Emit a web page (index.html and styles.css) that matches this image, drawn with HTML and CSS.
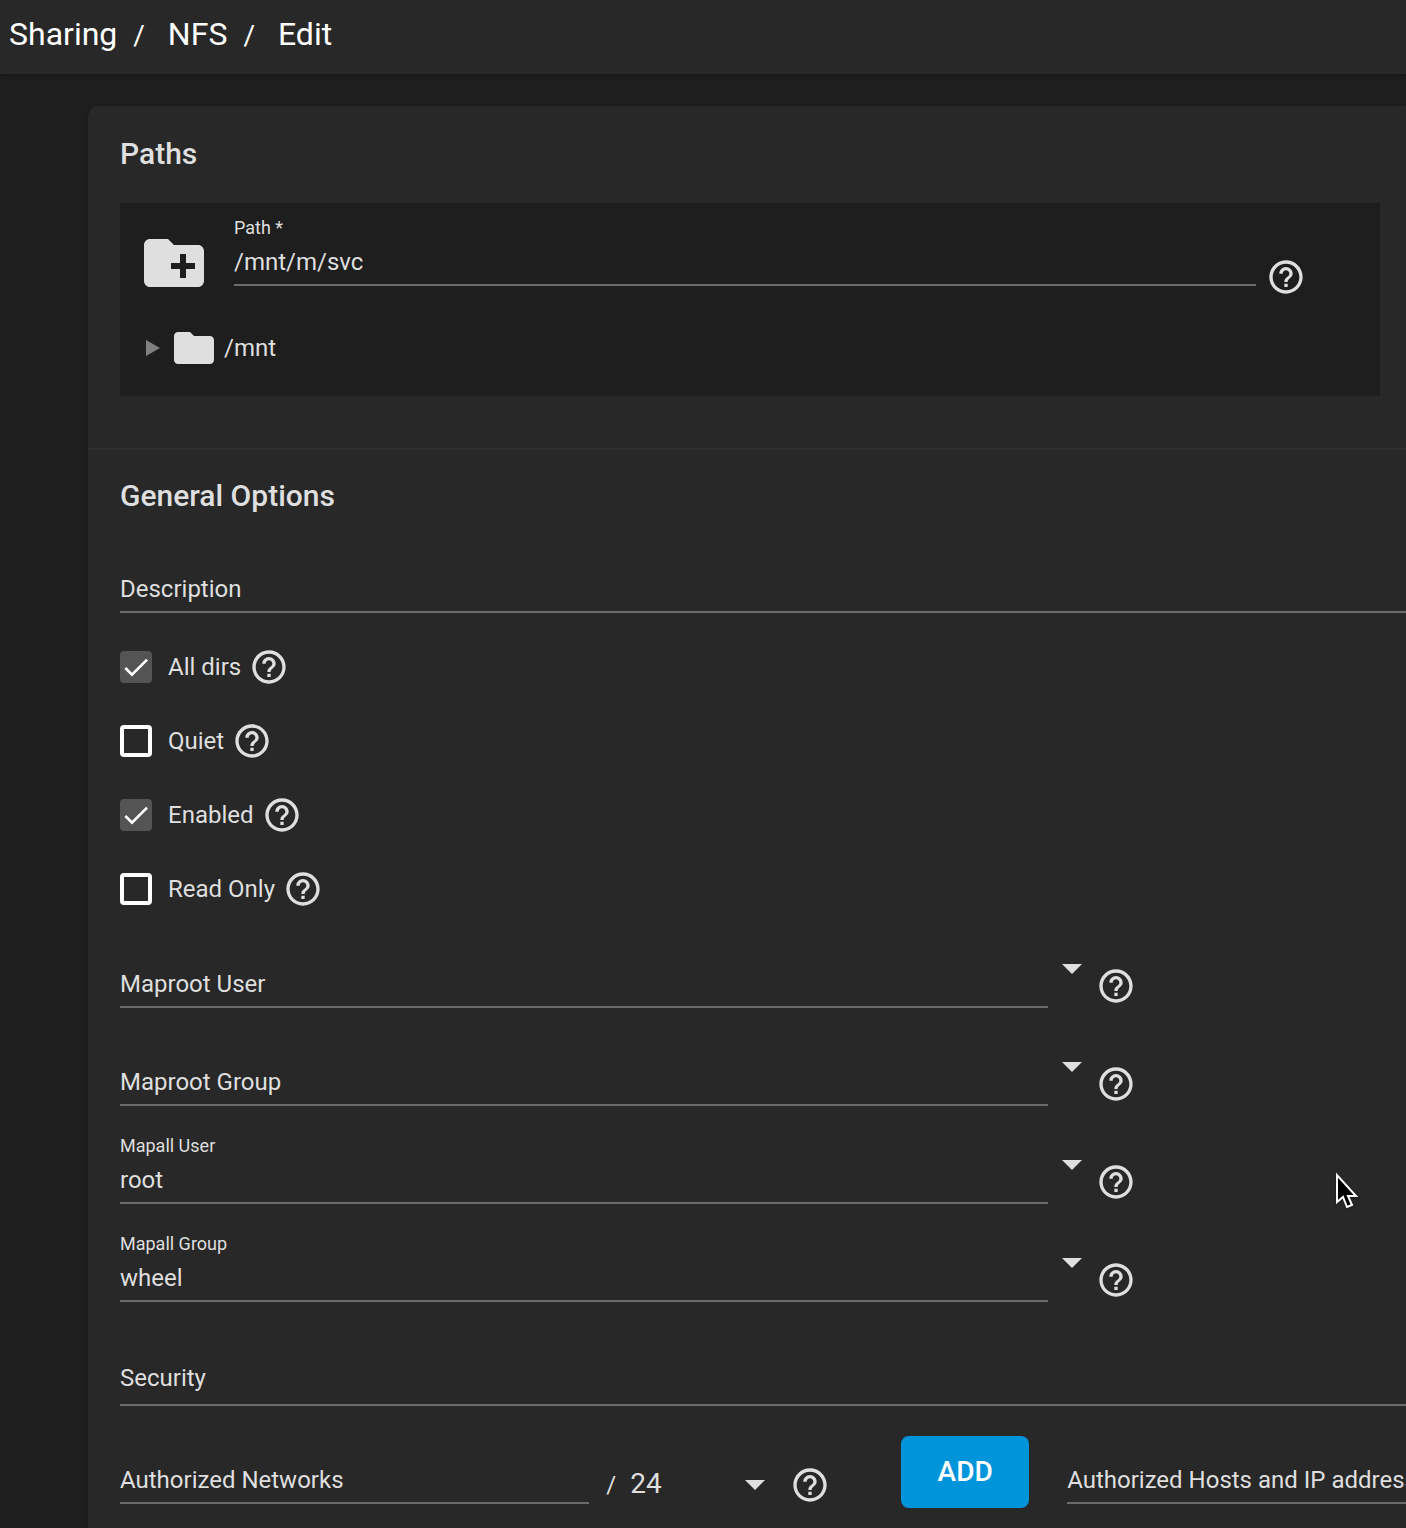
FILE: index.html
```html
<!DOCTYPE html>
<html lang="en">
<head>
  <meta charset="UTF-8">
  <meta name="viewport" content="width=device-width, initial-scale=1">
  <title>Sharing / NFS / Edit</title>
  <link rel="stylesheet" href="styles.css">
</head>
<body>
  <!-- shared icons -->
  <svg class="sprite" aria-hidden="true">
    <symbol id="icon-help" viewBox="0 0 24 24">
      <path d="M11 18h2v-2h-2v2zm1-16C6.48 2 2 6.48 2 12s4.48 10 10 10 10-4.48 10-10S17.52 2 12 2zm0 18c-4.41 0-8-3.59-8-8s3.59-8 8-8 8 3.59 8 8-3.59 8-8 8zm0-14c-2.21 0-4 1.79-4 4h2c0-1.100.9-2 2-2s2 .9 2 2c0 2-3 1.75-3 5h2c0-2.25 3-2.500 3-5 0-2.21-1.79-4-4-4z"/>
    </symbol>
    <symbol id="icon-arrow" viewBox="0 0 24 24">
      <path d="M7 10l5 5 5-5z"/>
    </symbol>
    <symbol id="icon-folder" viewBox="0 0 24 24">
      <path d="M10 4H4c-1.11 0-2 .89-2 2v12c0 1.1.9 2 2 2h16c1.1 0 2-.9 2-2V8c0-1.11-.9-2-2-2h-8l-2-2z"/>
    </symbol>
    <symbol id="icon-folder-plus" viewBox="0 0 24 24">
      <path fill-rule="evenodd" d="M10 4H4c-1.11 0-2 .89-2 2v12c0 1.1.9 2 2 2h16c1.1 0 2-.9 2-2V8c0-1.11-.9-2-2-2h-8l-2-2zM14 9h2v3h3v2h-3v3h-2v-3h-3v-2h3V9z"/>
    </symbol>
  </svg>

  <header class="topbar">
    <nav class="breadcrumb" aria-label="Breadcrumb">
      <a href="#sharing">Sharing</a>
      <span class="separator">/</span>
      <a href="#nfs">NFS</a>
      <span class="separator">/</span>
      <a href="#edit">Edit</a>
    </nav>
  </header>

  <main class="page">
    <form class="card">
      <section class="section">
        <h2 class="section-title">Paths</h2>
        <div class="explorer">
          <div class="path-row">
            <svg class="icon-xl" aria-hidden="true"><use href="#icon-folder-plus"/></svg>
            <div class="field">
              <label for="path">Path *</label>
              <input id="path" type="text" value="/mnt/m/svc" required>
            </div>
            <button type="button" class="help" aria-label="Path help"><svg><use href="#icon-help"/></svg></button>
          </div>
          <div class="tree-row">
            <button type="button" class="tree-toggle" aria-label="Expand /mnt">
              <svg viewBox="0 0 14 16"><path d="M0 0l14 8-14 8z"/></svg>
            </button>
            <svg class="icon-lg" aria-hidden="true"><use href="#icon-folder"/></svg>
            <span>/mnt</span>
          </div>
        </div>
      </section>

      <section class="section">
        <h2 class="section-title">General Options</h2>

        <div class="field empty">
          <label for="description">Description</label>
          <input id="description" type="text">
        </div>

        <div class="checks">
          <div class="check">
            <input id="alldirs" type="checkbox" checked>
            <label for="alldirs">All dirs</label>
            <button type="button" class="help" aria-label="All dirs help"><svg><use href="#icon-help"/></svg></button>
          </div>
          <div class="check">
            <input id="quiet" type="checkbox">
            <label for="quiet">Quiet</label>
            <button type="button" class="help" aria-label="Quiet help"><svg><use href="#icon-help"/></svg></button>
          </div>
          <div class="check">
            <input id="enabled" type="checkbox" checked>
            <label for="enabled">Enabled</label>
            <button type="button" class="help" aria-label="Enabled help"><svg><use href="#icon-help"/></svg></button>
          </div>
          <div class="check">
            <input id="readonly" type="checkbox">
            <label for="readonly">Read Only</label>
            <button type="button" class="help" aria-label="Read Only help"><svg><use href="#icon-help"/></svg></button>
          </div>
        </div>

        <div class="combos">
          <div class="combo">
            <div class="field empty">
              <label for="maproot-user">Maproot User</label>
              <input id="maproot-user" type="text">
            </div>
            <button type="button" class="drop" aria-label="Show users"><svg><use href="#icon-arrow"/></svg></button>
            <button type="button" class="help" aria-label="Maproot User help"><svg><use href="#icon-help"/></svg></button>
          </div>
          <div class="combo">
            <div class="field empty">
              <label for="maproot-group">Maproot Group</label>
              <input id="maproot-group" type="text">
            </div>
            <button type="button" class="drop" aria-label="Show groups"><svg><use href="#icon-arrow"/></svg></button>
            <button type="button" class="help" aria-label="Maproot Group help"><svg><use href="#icon-help"/></svg></button>
          </div>
          <div class="combo">
            <div class="field">
              <label for="mapall-user">Mapall User</label>
              <input id="mapall-user" type="text" value="root">
            </div>
            <button type="button" class="drop" aria-label="Show users"><svg><use href="#icon-arrow"/></svg></button>
            <button type="button" class="help" aria-label="Mapall User help"><svg><use href="#icon-help"/></svg></button>
          </div>
          <div class="combo">
            <div class="field">
              <label for="mapall-group">Mapall Group</label>
              <input id="mapall-group" type="text" value="wheel">
            </div>
            <button type="button" class="drop" aria-label="Show groups"><svg><use href="#icon-arrow"/></svg></button>
            <button type="button" class="help" aria-label="Mapall Group help"><svg><use href="#icon-help"/></svg></button>
          </div>
        </div>

        <div class="field empty security">
          <label for="security">Security</label>
          <select id="security">
            <option value=""></option>
            <option value="sys">SYS</option>
            <option value="krb5">KRB5</option>
          </select>
        </div>

        <div class="access">
          <div class="field empty networks">
            <label for="networks">Authorized Networks</label>
            <input id="networks" type="text">
          </div>
          <span class="slash">/</span>
          <div class="netmask">
            <select aria-label="Netmask">
              <option>8</option>
              <option>16</option>
              <option selected>24</option>
              <option>32</option>
            </select>
            <svg aria-hidden="true"><use href="#icon-arrow"/></svg>
          </div>
          <button type="button" class="help" aria-label="Authorized Networks help"><svg><use href="#icon-help"/></svg></button>
          <button type="button" class="add">ADD</button>
          <div class="field empty hosts">
            <label for="hosts">Authorized Hosts and IP addresses</label>
            <input id="hosts" type="text">
          </div>
        </div>
      </section>
    </form>
  </main>

  <svg class="pointer" viewBox="0 0 26 40" aria-hidden="true">
    <path d="M1 3v27l6-5 4 10 5-2-4-9h8z" fill="#000" stroke="#fff" stroke-width="2"/>
  </svg>
</body>
</html>
```

FILE: styles.css
```css
* {
  box-sizing: border-box;
}
body {
  margin: 0;
  min-height: 100vh;
  background: #1e1e1e;
  color: #dfdfdf;
  font-family: Roboto, sans-serif;
  font-size: 24px;
  line-height: 32px;
  overflow-x: hidden;
}
button, input, select {
  margin: 0;
  padding: 0;
  border: 0;
  border-radius: 0;
  background: none;
  color: inherit;
  font: inherit;
}
button {
  flex: none;
  cursor: pointer;
}
svg {
  display: block;
  flex: none;
  fill: currentColor;
}
.sprite {
  position: absolute;
  width: 0;
  height: 0;
}

/* Header */
.topbar {
  height: 74px;
  padding: 14px 9px;
  background: #282828;
  box-shadow: 0 1px 4px rgba(0, 0, 0, 0.3);
}
.breadcrumb {
  display: flex;
  align-items: baseline;
  color: #fff;
  font-size: 32px;
  line-height: 40px;
}
.breadcrumb a {
  color: inherit;
  text-decoration: none;
}
.separator {
  margin: 0 23px 0 16px;
  font-size: 28px;
}

/* Card */
.page {
  padding: 32px 0 0 88px;
}
.card {
  background: #282828;
  border-radius: 10px 0 0 0;
  box-shadow: 0 1px 4px rgba(0, 0, 0, 0.3);
}
.section {
  padding: 28px 0 20px 32px;
}
.section + .section {
  padding-top: 26px;
  border-top: 2px solid #303030;
}
.section-title {
  margin: 0 0 29px;
  font-size: 30px;
  font-weight: 500;
  line-height: 40px;
}

/* Path picker */
.explorer {
  margin: 0 26px 32px 0;
  padding: 15px 74px 24px 18px;
  background: #1e1e1e;
}
.path-row {
  display: flex;
  align-items: flex-end;
}
.path-row .field {
  flex: 1;
  margin: 0 10px 13px 24px;
}
.icon-xl {
  width: 72px;
  height: 72px;
}
.icon-lg {
  width: 48px;
  height: 48px;
}
.tree-row {
  display: flex;
  align-items: center;
  margin-top: 25px;
  padding-left: 8px;
}
.tree-toggle {
  margin-right: 10px;
  color: #808080;
}
.tree-toggle svg {
  width: 14px;
  height: 16px;
}
.tree-row span {
  margin-left: 6px;
}

/* Fields */
.field {
  display: grid;
  grid-template-rows: 24px 44px;
  min-width: 0;
}
.field label {
  font-size: 18px;
  line-height: 20px;
  white-space: nowrap;
}
.field input, .field select {
  grid-area: 2 / 1;
  width: 100%;
  min-width: 0;
  padding-bottom: 3px;
  border-bottom: 2px solid #6b6b6b;
  appearance: none;
  outline: none;
}
.field.empty label {
  grid-area: 2 / 1;
  overflow: hidden;
  font-size: 24px;
  line-height: 40px;
  pointer-events: none;
}
.help {
  width: 40px;
  height: 40px;
}
.help svg {
  width: 40px;
  height: 40px;
}

/* Checkboxes */
.checks {
  display: grid;
  gap: 34px;
  margin: 34px 0 31px;
}
.check {
  display: flex;
  align-items: center;
}
.check input {
  width: 32px;
  height: 32px;
  border: 4px solid #fff;
  border-radius: 4px;
  appearance: none;
}
.check input:checked {
  border: 0;
  background: #545454 url("data:image/svg+xml,%3Csvg xmlns='http://www.w3.org/2000/svg' viewBox='0 0 24 24'%3E%3Cpath d='M4 12.700L9 17.700 20.300 6.500' fill='none' stroke='white' stroke-width='2'/%3E%3C/svg%3E");
}
.check label {
  margin: 0 8px 0 16px;
}

/* Combo boxes */
.combos {
  display: grid;
  gap: 30px;
  width: 79%;
}
.combo {
  display: flex;
  align-items: flex-end;
}
.combo .field {
  flex: 1;
}
.combo .help, .path-row .help {
  margin-bottom: 2px;
}
.drop {
  margin-bottom: 16px;
}
.drop svg {
  width: 48px;
  height: 48px;
}
.security {
  grid-template-rows: 24px 48px;
  margin: 32px 0 30px;
}

/* Networks and hosts */
.access {
  display: flex;
  align-items: flex-start;
}
.networks {
  flex: 18 1 0;
}
.hosts {
  flex: 13 1 0;
}
.slash {
  width: 8px;
  margin: 33px 16px 0 17px;
}
.netmask {
  display: grid;
  width: 149px;
  margin-top: 24px;
}
.netmask select {
  grid-area: 1 / 1;
  font-size: 28px;
  appearance: none;
}
.netmask svg {
  grid-area: 1 / 1;
  justify-self: end;
  width: 48px;
  height: 48px;
  pointer-events: none;
}
.access .help {
  margin: 29px 71px 0 11px;
}
.add {
  width: 128px;
  height: 72px;
  margin-right: 38px;
  border-radius: 8px;
  background: #0095db;
  color: #fff;
  font-size: 28px;
  font-weight: 500;
}

.pointer {
  position: absolute;
  top: 1172px;
  left: 1336px;
  width: 26px;
  height: 40px;
  filter: drop-shadow(0 1px 1px rgba(0, 0, 0, 0.4));
}
```
